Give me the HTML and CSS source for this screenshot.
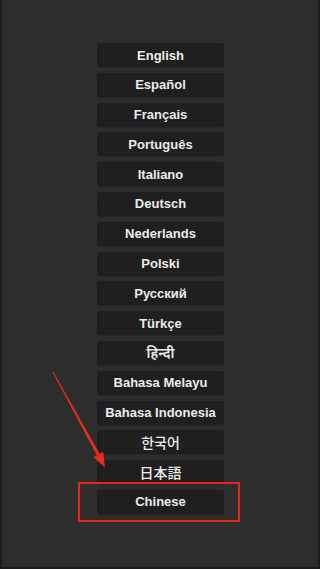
FILE: index.html
```html
<!DOCTYPE html>
<html>
<head>
<meta charset="utf-8">
<link rel="stylesheet" href="styles.css">
</head>
<body>
<div class="screen">
  <div class="list">
    <div class="lang">English</div>
    <div class="lang">Español</div>
    <div class="lang">Français</div>
    <div class="lang">Português</div>
    <div class="lang">Italiano</div>
    <div class="lang">Deutsch</div>
    <div class="lang">Nederlands</div>
    <div class="lang">Polski</div>
    <div class="lang">Русский</div>
    <div class="lang">Türkçe</div>
    <div class="lang hindi">हिन्दी</div>
    <div class="lang">Bahasa Melayu</div>
    <div class="lang">Bahasa Indonesia</div>
    <div class="lang cjk-kr">한국어</div>
    <div class="lang cjk-jp">日本語</div>
    <div class="lang">Chinese</div>
  </div>
  <div class="highlight"></div>
  <svg class="arrow" width="320" height="569" viewBox="0 0 320 569">
    <polygon fill="#ec2a1f" points="53.4,371.8 52.6,372.2 97.0,455.6 99.8,454.0"/>
    <polygon fill="#ec2a1f" points="105,467.5 103.2,451.8 93.4,457.2"/>
  </svg>
</div>
</body>
</html>
```
FILE: styles.css
```css
html, body {
  margin: 0;
  padding: 0;
  background: #1c1c1c;
}
.screen {
  position: relative;
  width: 316px;
  height: 567px;
  margin-left: 2px;
  background: #2d2d2d;
  overflow: hidden;
}
.list {
  display: flex;
  flex-direction: column;
  align-items: center;
  padding-top: 43px;
  padding-left: 1px;
  gap: 5.8px;
}
.lang {
  width: 127px;
  height: 24px;
  box-sizing: border-box;
  background: #1f1f1f;
  border-radius: 3px;
  display: flex;
  align-items: center;
  justify-content: center;
  color: #ececec;
  font-family: "Liberation Sans", Arial, sans-serif;
  font-weight: bold;
  font-size: 13px;
  box-shadow: 0 1px 0 #262626;
}
.hindi {
  font-family: "Noto Sans", sans-serif;
  font-weight: 600;
  font-size: 14px;
}
.cjk-kr {
  font-family: "Noto Sans CJK KR", sans-serif;
  font-weight: 500;
  font-size: 14px;
}
.cjk-jp {
  font-family: "Noto Sans CJK JP", sans-serif;
  font-weight: 500;
  font-size: 14px;
}
.highlight {
  position: absolute;
  left: 76px;
  top: 482px;
  width: 162px;
  height: 40px;
  box-sizing: border-box;
  border: 2px solid #e8241c;
}
.arrow {
  position: absolute;
  left: -2px;
  top: 0;
}
```
